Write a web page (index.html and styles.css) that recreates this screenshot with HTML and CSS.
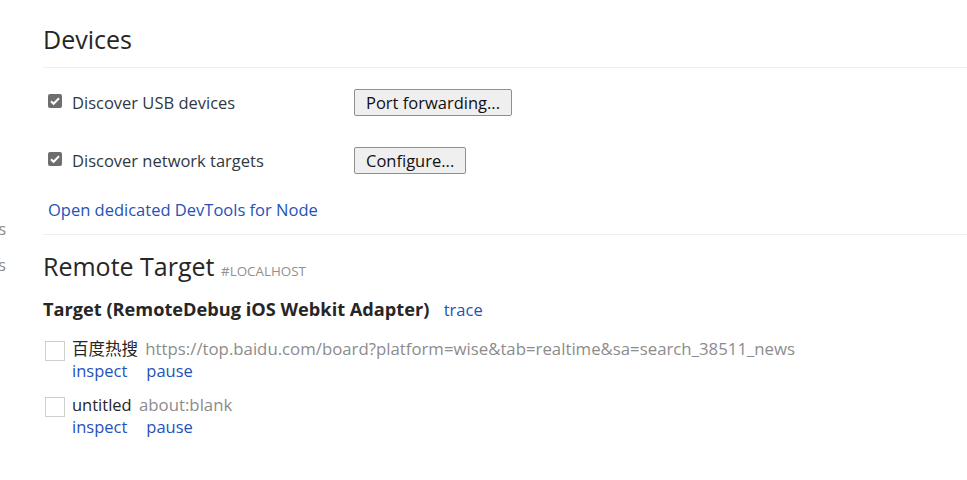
FILE: index.html
```html
<!DOCTYPE html>
<html lang="en">
<head>
  <meta charset="UTF-8">
  <title>Inspect with Chrome Developer Tools</title>
  <link rel="stylesheet" href="styles.css">
</head>
<body>

  <div class="page">
    <!-- Sidebar (scrolled off to the left) -->
    <div class="sidebar">
      <div class="nav-item">Pages</div>
      <div class="nav-item">Apps</div>
    </div>

    <div class="content">
      <!-- Devices -->
      <div class="section devices">
        <h1 class="title">Devices</h1>

        <div class="option-row">
          <label class="check-label">
            <span class="box checked"></span>
            Discover USB devices
          </label>
          <button class="btn">Port forwarding...</button>
        </div>

        <div class="option-row">
          <label class="check-label">
            <span class="box checked"></span>
            Discover network targets
          </label>
          <button class="btn">Configure...</button>
        </div>

        <a class="link node-link" href="#">Open dedicated DevTools for Node</a>
      </div>

      <!-- Remote target -->
      <div class="section remote">
        <h1 class="title">Remote Target <span class="host">#LOCALHOST</span></h1>

        <div class="target-head">
          <span class="target-name">Target (RemoteDebug iOS Webkit Adapter)</span>
          <a class="link" href="#">trace</a>
        </div>

        <div class="target-row">
          <span class="box"></span>
          <div class="target-info">
            <div class="target-line">
              <span class="page-name">百度热搜</span>
              <span class="page-url">https://top.baidu.com/board?platform=wise&amp;tab=realtime&amp;sa=search_38511_news</span>
            </div>
            <div class="actions">
              <a class="link" href="#">inspect</a>
              <a class="link" href="#">pause</a>
            </div>
          </div>
        </div>

        <div class="target-row">
          <span class="box"></span>
          <div class="target-info">
            <div class="target-line">
              <span class="page-name">untitled</span>
              <span class="page-url">about:blank</span>
            </div>
            <div class="actions">
              <a class="link" href="#">inspect</a>
              <a class="link" href="#">pause</a>
            </div>
          </div>
        </div>
      </div>
    </div>
  </div>

</body>
</html>
```

FILE: styles.css
```css
body {
  margin: 0;
  font-family: "Open Sans", "Noto Sans", "Noto Sans CJK SC", sans-serif;
  font-size: 16.5px;
  color: #303942;
  background: #fff;
  overflow: hidden;
}

.page {
  display: flex;
  height: 480px;
}

.sidebar {
  width: 6px;
  overflow: hidden;
  padding-top: 217px;
  display: flex;
  flex-direction: column;
  align-items: flex-end;
  gap: 11px;
}

.nav-item {
  white-space: nowrap;
  color: #8a8a8a;
  font-size: 16px;
  line-height: 25px;
}

.content {
  flex: 1;
  padding-left: 37px;
}

.section {
  border-bottom: 1px solid #eee;
}

.title {
  margin: 0;
  font-size: 25px;
  font-weight: normal;
  color: #262626;
  line-height: 30px;
}

.devices .title {
  padding: 24px 0 13px;
  border-bottom: 1px solid #eee;
}

.option-row {
  display: flex;
  align-items: center;
  height: 27px;
  margin-left: 5px;
}

.devices .option-row:first-of-type {
  margin-top: 21px;
}

.option-row + .option-row {
  margin-top: 31px;
}

.check-label {
  display: flex;
  align-items: center;
  gap: 10px;
  width: 306px;
}

.box {
  display: inline-block;
  box-sizing: border-box;
  width: 20px;
  height: 20px;
  border: 1px solid #cfcfcf;
  background: #fff;
  flex-shrink: 0;
}

.box.checked {
  width: 14px;
  height: 14px;
  border: none;
  border-radius: 2px;
  background: #6e6e6e url("data:image/svg+xml,%3Csvg xmlns='http://www.w3.org/2000/svg' viewBox='0 0 14 14'%3E%3Cpath d='M3 7.2l2.6 2.6L11 4.2' fill='none' stroke='%23fff' stroke-width='2'/%3E%3C/svg%3E") no-repeat center;
  position: relative;
  top: -2px;
}

.btn {
  font-family: inherit;
  font-size: 16.5px;
  color: #111;
  height: 27px;
  padding: 0 11px;
  background: #efefef;
  border: 1px solid #8f8f8f;
  border-radius: 2px;
}

.link {
  color: #2452b8;
  text-decoration: none;
}

.node-link {
  display: inline-block;
  margin: 24px 0 12px 5px;
  line-height: 24px;
}

.remote {
  border-bottom: none;
}

.remote .title {
  padding-top: 16px;
}

.host {
  font-size: 13.4px;
  color: #909090;
  text-transform: uppercase;
}

.target-head {
  margin-top: 11px;
  line-height: 24px;
}

.target-name {
  font-weight: bold;
  font-size: 18.2px;
  color: #262626;
  margin-right: 10px;
}

.target-row {
  display: flex;
  gap: 7px;
  margin: 16px 0 0 2px;
}

.target-row + .target-row {
  margin-top: 12px;
}

.target-row .box {
  margin-top: 3px;
}

.target-info {
  line-height: 22px;
}

.page-name {
  color: #262626;
  margin-right: 3px;
}

.page-url {
  color: #8c8c8c;
  font-size: 16.8px;
}

.actions {
  display: flex;
  gap: 19px;
}
```
